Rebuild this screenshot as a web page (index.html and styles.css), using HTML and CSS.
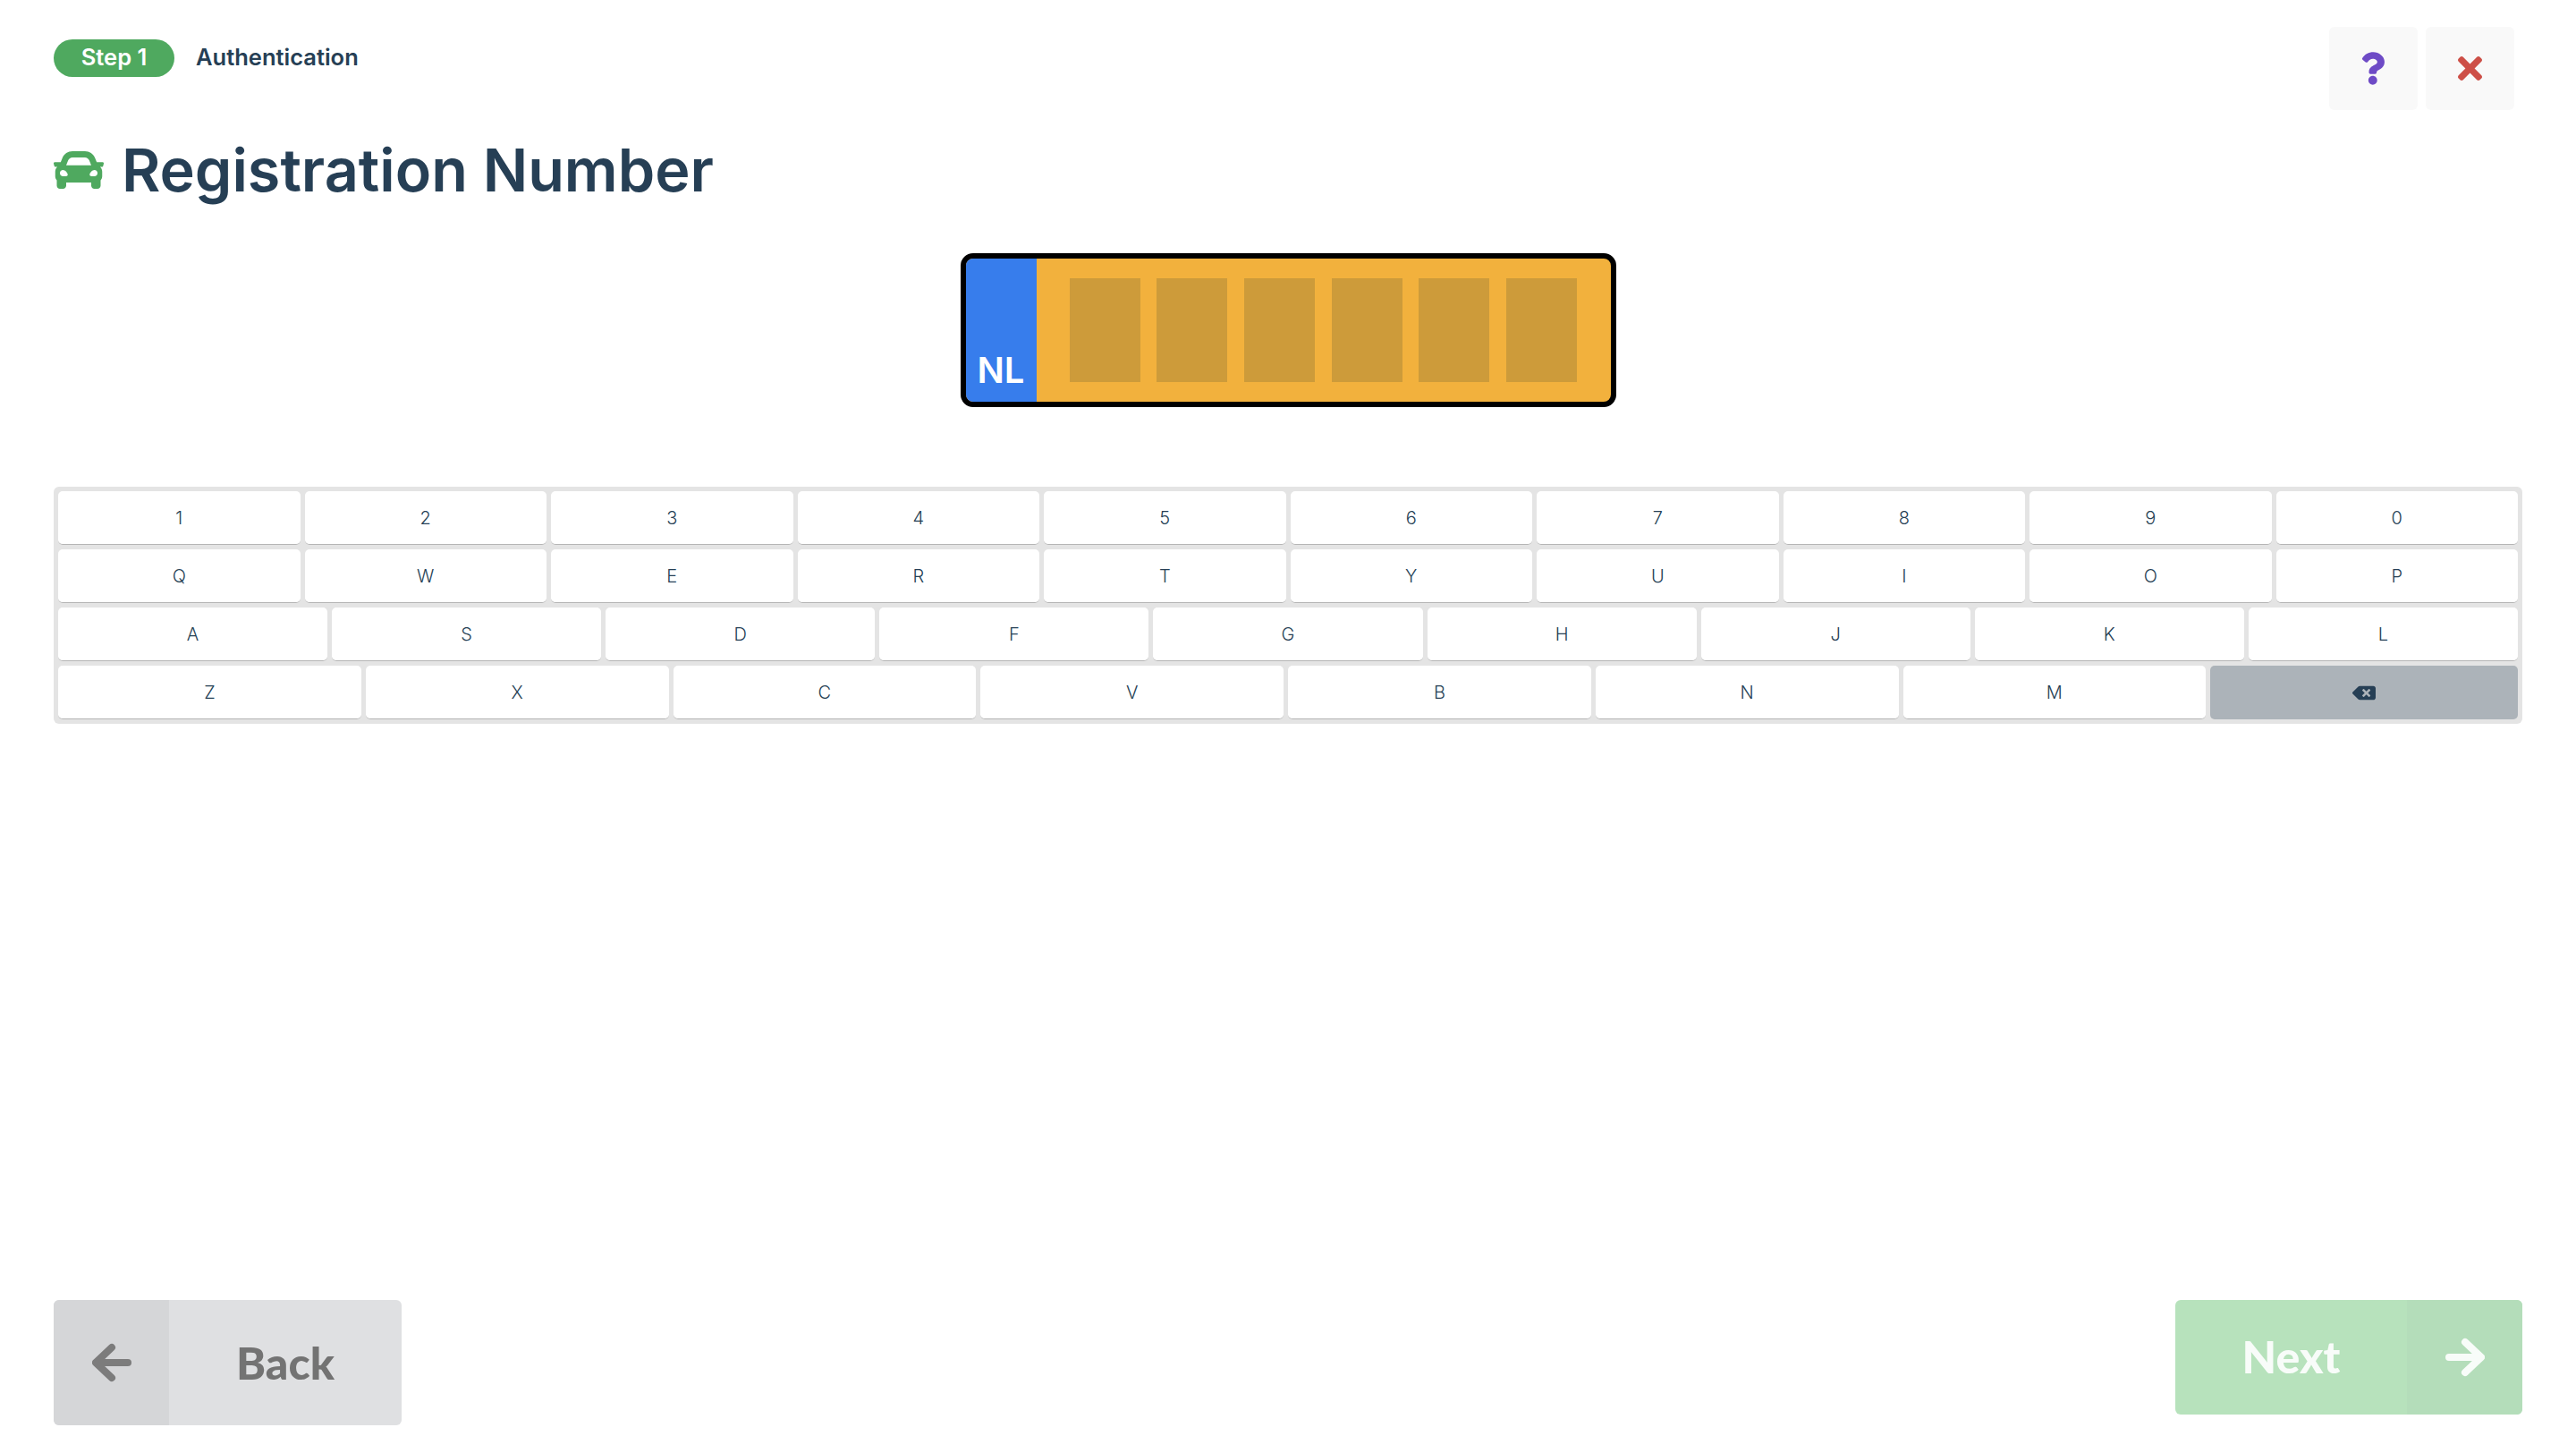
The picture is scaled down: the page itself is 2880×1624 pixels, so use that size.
FILE: index.html
```html
<!DOCTYPE html>
<html lang="en">
<head>
    <meta charset="UTF-8">
    <meta name="viewport" content="width=device-width, initial-scale=1.0">
    <title>Registration Number</title>
    <link rel="stylesheet" href="styles.css">
</head>
<body>
    <main class="page">
        <header class="page-header">
            <div class="heading">
                <div class="step-row">
                    <span class="step-pill">Step 1</span>
                    <span class="step-name">Authentication</span>
                </div>
                <h1 class="title">
                    <svg class="title-icon" viewBox="0 64 512 384" aria-hidden="true"><path d="M499.99 176h-59.87l-16.64-41.6C406.38 91.63 365.57 64 319.5 64h-127c-46.06 0-86.88 27.63-103.99 70.4L71.87 176H12.01C4.2 176-1.53 183.34.37 190.91l6 24C7.7 220.25 12.5 224 18.01 224h20.07C24.65 235.73 16 252.78 16 272v48c0 16.12 6.16 30.67 16 41.93V416c0 17.67 14.33 32 32 32h32c17.67 0 32-14.33 32-32v-32h256v32c0 17.67 14.33 32 32 32h32c17.67 0 32-14.33 32-32v-54.07c9.84-11.25 16-25.8 16-41.93v-48c0-19.22-8.65-36.27-22.07-48H494c5.51 0 10.31-3.75 11.64-9.09l6-24c1.89-7.57-3.84-14.91-11.65-14.91zm-352.06-17.83c7.29-18.22 24.94-30.17 44.57-30.17h127c19.63 0 37.28 11.95 44.57 30.17L384 208H128l19.93-49.83zM96 319.8c-19.2 0-32-12.76-32-31.9S76.8 256 96 256s48 28.71 48 47.85-28.8 15.95-48 15.95zm320 0c-19.2 0-48 3.19-48-15.95S396.8 256 416 256s32 12.76 32 31.9-12.8 31.9-32 31.9z"/></svg>
                    Registration Number
                </h1>
            </div>
            <div class="actions">
                <button class="action-btn" type="button" aria-label="Help">
                    <svg class="icon-help" viewBox="26 0 352 512" aria-hidden="true"><path d="M202.021 0C122.202 0 70.503 32.703 29.914 91.026c-7.363 10.58-5.093 25.086 5.178 32.874l43.138 32.709c10.373 7.865 25.132 6.026 33.253-4.148 25.049-31.381 43.63-49.449 82.757-49.449 30.764 0 68.816 19.799 68.816 49.631 0 22.552-18.617 34.134-48.993 51.164-35.423 19.86-82.299 44.576-82.299 106.405V320c0 13.255 10.745 24 24 24h72.471c13.255 0 24-10.745 24-24v-5.773c0-42.86 125.268-44.645 125.268-160.627C377.504 66.256 286.902 0 202.021 0zM192 373.459c-38.196 0-69.271 31.075-69.271 69.271 0 38.195 31.075 69.27 69.271 69.27s69.271-31.075 69.271-69.271-31.075-69.27-69.271-69.27z"/></svg>
                </button>
                <button class="action-btn" type="button" aria-label="Close">
                    <svg class="icon-close" viewBox="0 80 352 352" aria-hidden="true"><path d="M242.72 256l100.07-100.07c12.28-12.28 12.28-32.19 0-44.48l-22.24-22.24c-12.28-12.28-32.19-12.28-44.48 0L176 189.28 75.93 89.21c-12.28-12.28-32.19-12.28-44.48 0L9.21 111.45c-12.28 12.28-12.28 32.19 0 44.48L109.28 256 9.21 356.07c-12.28 12.28-12.28 32.19 0 44.48l22.24 22.24c12.28 12.28 32.2 12.28 44.48 0L176 322.72l100.07 100.07c12.28 12.28 32.2 12.28 44.48 0l22.24-22.24c12.28-12.28 12.28-32.19 0-44.48L242.72 256z"/></svg>
                </button>
            </div>
        </header>

        <section class="plate">
            <div class="plate-country">NL</div>
            <div class="plate-slots">
                <span class="slot"></span>
                <span class="slot"></span>
                <span class="slot"></span>
                <span class="slot"></span>
                <span class="slot"></span>
                <span class="slot"></span>
            </div>
        </section>

        <section class="keyboard">
            <div class="key-row row-ten">
                <button class="key" type="button">1</button>
                <button class="key" type="button">2</button>
                <button class="key" type="button">3</button>
                <button class="key" type="button">4</button>
                <button class="key" type="button">5</button>
                <button class="key" type="button">6</button>
                <button class="key" type="button">7</button>
                <button class="key" type="button">8</button>
                <button class="key" type="button">9</button>
                <button class="key" type="button">0</button>
            </div>
            <div class="key-row row-ten">
                <button class="key" type="button">Q</button>
                <button class="key" type="button">W</button>
                <button class="key" type="button">E</button>
                <button class="key" type="button">R</button>
                <button class="key" type="button">T</button>
                <button class="key" type="button">Y</button>
                <button class="key" type="button">U</button>
                <button class="key" type="button">I</button>
                <button class="key" type="button">O</button>
                <button class="key" type="button">P</button>
            </div>
            <div class="key-row row-nine">
                <button class="key" type="button">A</button>
                <button class="key" type="button">S</button>
                <button class="key" type="button">D</button>
                <button class="key" type="button">F</button>
                <button class="key" type="button">G</button>
                <button class="key" type="button">H</button>
                <button class="key" type="button">J</button>
                <button class="key" type="button">K</button>
                <button class="key" type="button">L</button>
            </div>
            <div class="key-row row-eight">
                <button class="key" type="button">Z</button>
                <button class="key" type="button">X</button>
                <button class="key" type="button">C</button>
                <button class="key" type="button">V</button>
                <button class="key" type="button">B</button>
                <button class="key" type="button">N</button>
                <button class="key" type="button">M</button>
                <button class="key key-back" type="button" aria-label="Backspace">
                    <svg class="icon-backspace" viewBox="0 0 640 512" aria-hidden="true"><path d="M576 64H205.26A63.97 63.97 0 0 0 160 82.75L9.37 233.37c-12.5 12.5-12.5 32.76 0 45.25L160 429.25c12 12 28.28 18.75 45.25 18.75H576c35.35 0 64-28.65 64-64V128c0-35.35-28.65-64-64-64zm-84.69 254.06c6.25 6.25 6.25 16.38 0 22.63l-22.62 22.62c-6.25 6.25-16.38 6.25-22.63 0L384 301.25l-62.06 62.06c-6.25 6.25-16.38 6.25-22.63 0l-22.62-22.62c-6.25-6.25-6.25-16.38 0-22.63L338.75 256l-62.06-62.06c-6.25-6.25-6.25-16.38 0-22.63l22.62-22.62c6.25-6.25 16.38-6.25 22.63 0L384 210.75l62.06-62.06c6.25-6.25 16.38-6.25 22.63 0l22.62 22.62c6.25 6.25 6.25 16.38 0 22.63L429.25 256l62.06 62.06z"/></svg>
                </button>
            </div>
        </section>

        <footer class="page-footer">
            <button class="nav-btn nav-back" type="button">
                <span class="nav-cap">
                    <svg class="nav-arrow" viewBox="0 0 44 44" aria-hidden="true"><path d="M40 22H5M22 5 4 22l18 17"/></svg>
                </span>
                <span class="nav-label">Back</span>
            </button>
            <button class="nav-btn nav-next" type="button">
                <span class="nav-label">Next</span>
                <span class="nav-cap">
                    <svg class="nav-arrow" viewBox="0 0 44 44" aria-hidden="true"><path d="M4 22h35M22 5l18 17-18 17"/></svg>
                </span>
            </button>
        </footer>
    </main>
</body>
</html>
```

FILE: styles.css
```css
* {
    box-sizing: border-box;
}

html, body {
    margin: 0;
    height: 100%;
    background: #fff;
}

body {
    font-family: 'Inter', Arial, sans-serif;
    color: #263F55;
}

button {
    font-family: inherit;
    border: none;
    padding: 0;
    cursor: pointer;
}

.page {
    display: flex;
    flex-direction: column;
    height: 1624px;
    padding: 30px 60px 31px;
}

.page-header {
    display: flex;
    justify-content: space-between;
    align-items: flex-start;
    height: 253px;
}

.step-row {
    display: flex;
    align-items: center;
    gap: 24px;
    margin-top: 14px;
}

.step-pill {
    width: 135px;
    height: 42px;
    display: flex;
    align-items: center;
    justify-content: center;
    padding-bottom: 3px;
    background: #4FA95F;
    color: #fff;
    border-radius: 21px;
    font-size: 25.5px;
    font-weight: 600;
}

.step-name {
    padding-bottom: 3px;
    font-size: 25.5px;
    font-weight: 600;
}

.title {
    display: flex;
    align-items: center;
    gap: 20px;
    margin: 62px 0 0;
    font-size: 66.5px;
    line-height: 84px;
    font-weight: 600;
}

.title-icon {
    width: 56px;
    height: 42px;
    fill: #4FA95F;
}

.actions {
    display: flex;
    gap: 9px;
    margin-right: 9px;
}

.action-btn {
    width: 99px;
    height: 93px;
    display: flex;
    align-items: center;
    justify-content: center;
    background: #F9F9F9;
    border-radius: 6px;
}

.icon-help {
    width: 25px;
    height: 37px;
    fill: #6E4BC6;
}

.icon-close {
    width: 27px;
    height: 27px;
    fill: #CD4F47;
}

.plate {
    display: flex;
    width: 733px;
    height: 172px;
    margin: 0 auto;
    border: 6px solid #000;
    border-radius: 14px;
    background: #F2B13D;
    overflow: hidden;
}

.plate-country {
    width: 79px;
    display: flex;
    align-items: flex-end;
    justify-content: center;
    padding-bottom: 14px;
    background: #377DEC;
    color: #fff;
    font-size: 40px;
    line-height: 42px;
    font-weight: 600;
}

.plate-slots {
    flex: 1;
    display: flex;
    gap: 18.7px;
    padding: 22px 0 0 37px;
}

.slot {
    width: 79px;
    height: 116px;
    background: #CD9B3A;
}

.keyboard {
    display: flex;
    flex-direction: column;
    gap: 5px;
    margin-top: 89px;
    padding: 5px;
    background: #E4E4E4;
    border-radius: 6px;
}

.key-row {
    display: grid;
    gap: 5px;
    height: 60px;
}

.row-ten {
    grid-template-columns: repeat(10, 1fr);
}

.row-nine {
    grid-template-columns: repeat(9, 1fr);
}

.row-eight {
    grid-template-columns: repeat(7, 339fr) 344fr;
}

.key {
    display: flex;
    align-items: center;
    justify-content: center;
    padding-top: 1px;
    background: #fff;
    border-bottom: 1px solid #B5B5B5;
    border-radius: 5px;
    color: #263F55;
    font-size: 20px;
    font-weight: 300;
}

.key-back {
    padding-top: 0;
    background: #ACB3B9;
    border-bottom: none;
}

.icon-backspace {
    width: 26px;
    height: 21px;
    fill: #263F55;
}

.page-footer {
    display: flex;
    justify-content: space-between;
    align-items: flex-start;
    margin-top: auto;
    height: 140px;
}

.nav-btn {
    display: flex;
    align-items: stretch;
    border-radius: 6px;
    overflow: hidden;
    font-family: 'Lato', Arial, sans-serif;
    font-size: 50px;
    font-weight: 900;
}

.nav-back {
    width: 389px;
    height: 140px;
    background: #DFE0E2;
    color: #737373;
}

.nav-back .nav-cap {
    width: 129px;
    background: #D5D6D8;
}

.nav-next {
    width: 388px;
    height: 128px;
    background: #B7E2BC;
    color: #F8FCF9;
}

.nav-next .nav-cap {
    width: 129px;
    background: #B4DDBA;
}

.nav-next .nav-label {
    padding-bottom: 2px;
}

.nav-cap {
    display: flex;
    align-items: center;
    justify-content: center;
}

.nav-label {
    flex: 1;
    display: flex;
    align-items: center;
    justify-content: center;
}

.nav-arrow {
    width: 44px;
    height: 44px;
    fill: none;
    stroke-width: 8;
    stroke-linecap: round;
    stroke-linejoin: round;
}

.nav-back .nav-arrow {
    stroke: #7C7C7C;
}

.nav-next .nav-arrow {
    stroke: #F8FCF9;
}
```
